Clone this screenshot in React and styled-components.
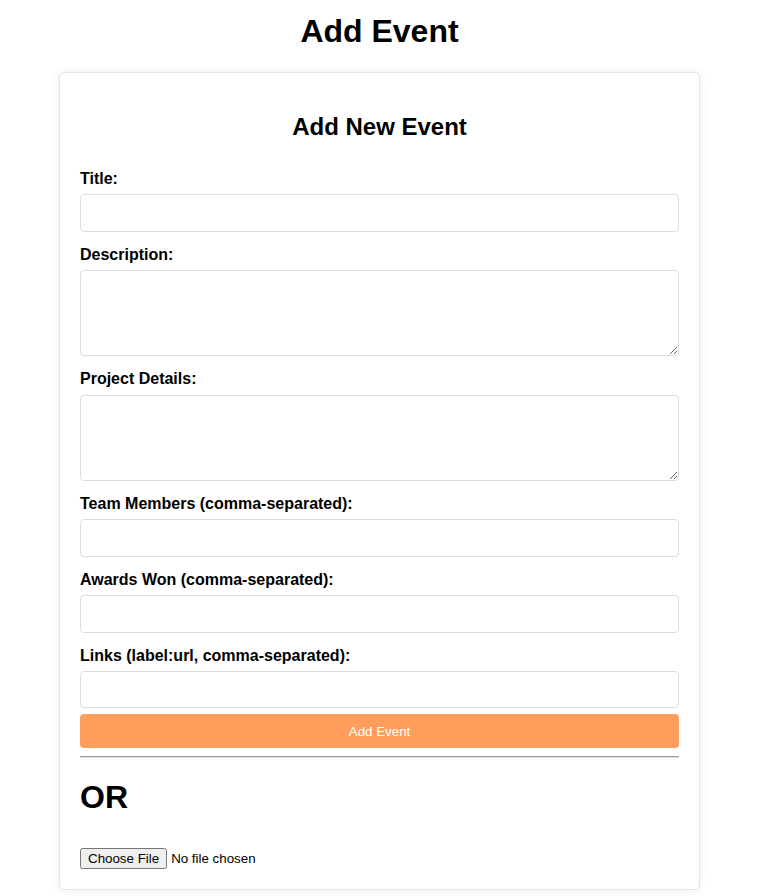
import React from 'react'
import styled, { createGlobalStyle } from 'styled-components'

const GlobalStyle = createGlobalStyle`
  body {
    margin: 0;
    background: #fff;
    font-family: "Liberation Sans", Arial, sans-serif;
    color: #000;
  }
`

const Page = styled.div`
  width: 641px;
  margin-left: 59px;
  padding-bottom: 7px;
`

const PageTitle = styled.h1`
  font-size: 32px;
  font-weight: bold;
  text-align: center;
  margin: 13px 0 22px;
`

const Card = styled.div`
  border: 1px solid #e4e4e4;
  border-radius: 5px;
  box-shadow: 0 0 8px rgba(0, 0, 0, 0.08);
  padding: 20px;
  background: #fff;
`

const FormTitle = styled.h2`
  font-size: 24px;
  font-weight: bold;
  text-align: center;
  margin: 20px 0 29px;
`

const Form = styled.form`
  display: flex;
  flex-direction: column;
`

const Label = styled.label`
  display: block;
  font-size: 16px;
  font-weight: bold;
  line-height: 18.4px;
  margin-bottom: 6px;
`

const TextInput = styled.input`
  box-sizing: border-box;
  width: 100%;
  height: 37.5px;
  margin: 0 0 ${(p) => (p.$last ? '6px' : '14px')};
  padding: 8px;
  border: 1px solid #ddd;
  border-radius: 4px;
  font-size: 14px;
  font-family: inherit;
`

const TextArea = styled.textarea`
  box-sizing: border-box;
  display: block;
  width: 100%;
  height: 86px;
  margin: 0 0 14px;
  padding: 8px;
  border: 1px solid #ddd;
  border-radius: 4px;
  font-size: 14px;
  font-family: inherit;
`

const SubmitButton = styled.button`
  height: 34px;
  width: 100%;
  border: none;
  border-radius: 4px;
  background: #ff9e5c;
  color: #fff;
  font-family: "Liberation Sans", Arial, sans-serif;
  font-size: 13.33px;
  cursor: pointer;
`

const Divider = styled.hr`
  margin: 8px 0 0;
  border: none;
  border-top: 1px solid #9a9a9a;
  border-bottom: 1px solid #e2e2e2;
`

const OrHeading = styled.h1`
  font-size: 32px;
  font-weight: bold;
  margin: 21px 0 32px;
`

const FileInput = styled.input`
  display: block;
  margin: 0;
  font-family: "Liberation Sans", Arial, sans-serif;
  font-size: 13.33px;
`

const fields = [
  { label: 'Title:', type: 'input' },
  { label: 'Description:', type: 'textarea' },
  { label: 'Project Details:', type: 'textarea' },
  { label: 'Team Members (comma-separated):', type: 'input' },
  { label: 'Awards Won (comma-separated):', type: 'input' },
  { label: 'Links (label:url, comma-separated):', type: 'input' },
]

export default function App() {
  return (
    <Page>
      <GlobalStyle />
      <PageTitle>Add Event</PageTitle>
      <Card>
        <FormTitle>Add New Event</FormTitle>
        <Form onSubmit={(e) => e.preventDefault()}>
          {fields.map((f, i) => (
            <div key={f.label}>
              <Label>{f.label}</Label>
              {f.type === 'textarea'
                ? <TextArea />
                : <TextInput type="text" $last={i === fields.length - 1} />}
            </div>
          ))}
          <SubmitButton type="submit">Add Event</SubmitButton>
        </Form>
        <Divider />
        <OrHeading>OR</OrHeading>
        <FileInput type="file" />
      </Card>
    </Page>
  )
}
